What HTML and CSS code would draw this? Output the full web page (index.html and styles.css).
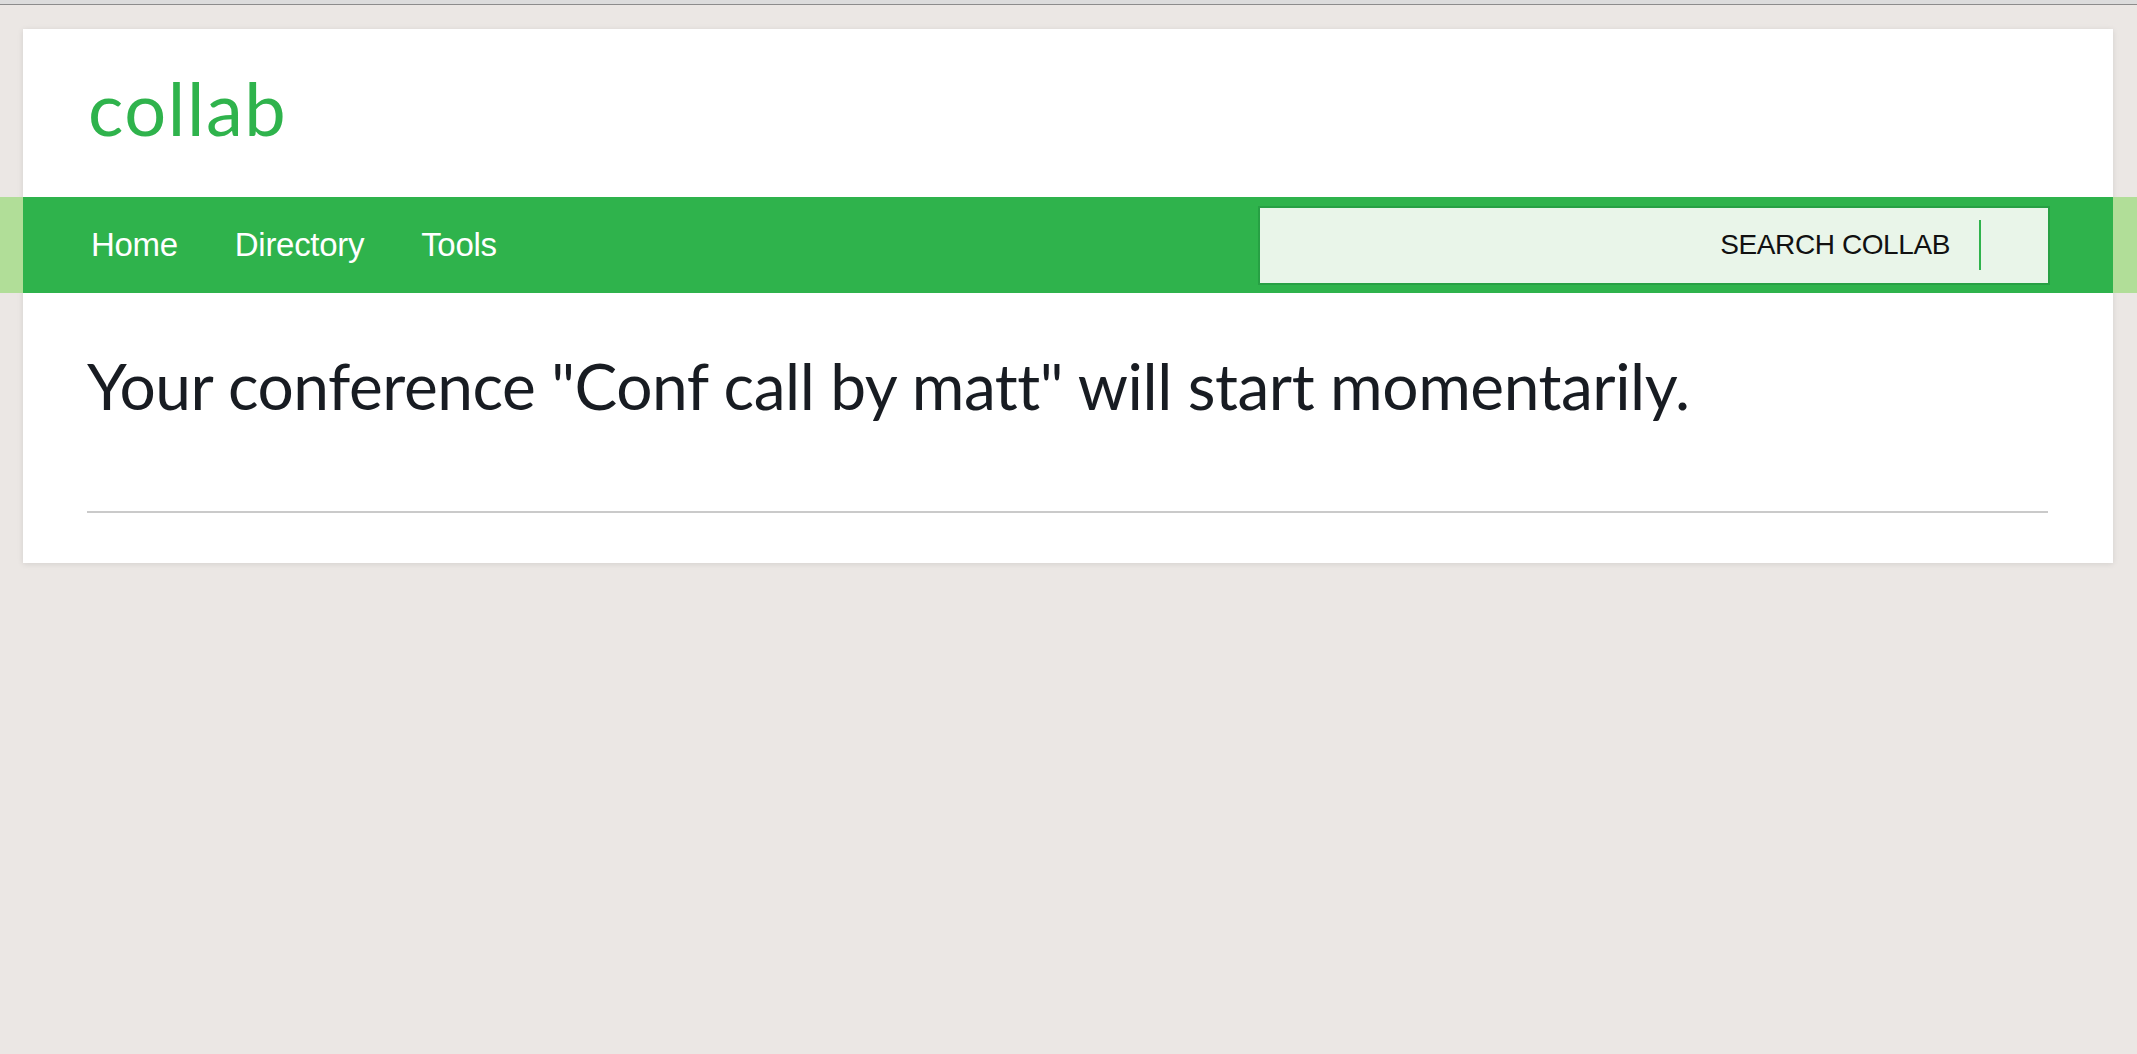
FILE: index.html
```html
<!DOCTYPE html>
<html lang="en">
<head>
<meta charset="utf-8">
<title>collab</title>
<link rel="stylesheet" href="styles.css">
</head>
<body>
<div class="topbar"></div>
<div class="page">
  <div class="card">
    <header class="brand">
      <span class="logo">collab</span>
    </header>
    <nav class="nav">
      <ul class="nav-links">
        <li><a href="#">Home</a></li>
        <li><a href="#">Directory</a></li>
        <li><a href="#">Tools</a></li>
      </ul>
      <div class="search">
        <span class="search-label">SEARCH COLLAB</span>
        <span class="caret"></span>
      </div>
    </nav>
    <main class="content">
      <h1 class="message">Your conference "Conf call by matt" will start momentarily.</h1>
      <hr class="rule">
    </main>
  </div>
</div>
</body>
</html>
```
FILE: styles.css
```css
html, body {
  margin: 0;
  padding: 0;
}
body {
  background: #ebe7e4;
  min-height: 1054px;
  font-family: "Liberation Sans", Arial, sans-serif;
}
.topbar {
  height: 4px;
  background: #dcdcdc;
  border-bottom: 1px solid #8c8c8c;
}
.page {
  padding: 24px 24px 0 23px;
}
.card {
  background: #fff;
  box-shadow: 0 1px 6px rgba(0,0,0,0.10);
  display: flex;
  flex-direction: column;
}
.brand {
  height: 168px;
  padding-left: 65px;
  display: flex;
  align-items: flex-start;
}
.logo {
  font-family: Lato, "Noto Sans", sans-serif;
  font-size: 74px;
  line-height: 1;
  color: #2fb34c;
  margin-top: 42px;
  letter-spacing: 1.6px;
}
.nav {
  height: 96px;
  background: #2fb34c;
  box-shadow: -23px 0 0 #b1de98, 24px 0 0 #b1de98;
  display: flex;
  align-items: center;
  justify-content: space-between;
  padding: 0 63px 0 68px;
}
.nav-links {
  list-style: none;
  margin: 0;
  padding: 0;
  display: flex;
  gap: 57px;
}
.nav-links a {
  color: #fff;
  text-decoration: none;
  font-size: 33px;
  letter-spacing: -0.3px;
}
.search {
  width: 792px;
  height: 79px;
  box-sizing: border-box;
  background: #e9f5e9;
  border: 2px solid #27a044;
  display: flex;
  align-items: center;
  justify-content: flex-end;
  padding-right: 67px;
}
.search-label {
  font-size: 28px;
  color: #111;
  letter-spacing: -0.4px;
}
.caret {
  width: 2px;
  height: 50px;
  background: #2fb34c;
  margin-left: 29px;
}
.content {
  padding: 0 65px 0 64px;
}
.message {
  font-family: Lato, "Noto Sans", sans-serif;
  font-weight: 400;
  font-size: 64px;
  line-height: 1;
  color: #181c22;
  margin: 61px 0 0 0;
  letter-spacing: -0.45px;
}
.rule {
  border: 0;
  border-top: 2px solid #cacaca;
  margin: 93px 0 50px 0;
}
```
